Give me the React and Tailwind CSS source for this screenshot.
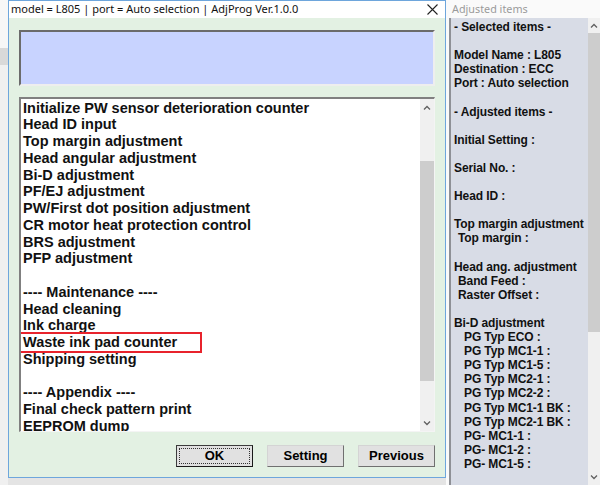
import { useState } from "react";

// 왼쪽 리스트 항목 (null = 빈 줄)
const menuItems = [
  "Initialize PW sensor deterioration counter",
  "Head ID input",
  "Top margin adjustment",
  "Head angular adjustment",
  "Bi-D adjustment",
  "PF/EJ adjustment",
  "PW/First dot position adjustment",
  "CR motor heat protection control",
  "BRS adjustment",
  "PFP adjustment",
  null,
  "---- Maintenance ----",
  "Head cleaning",
  "Ink charge",
  "Waste ink pad counter",
  "Shipping setting",
  null,
  "---- Appendix ----",
  "Final check pattern print",
  "EEPROM dump",
];

// 오른쪽 패널 줄: [텍스트, 들여쓰기]
const adjustedLines = [
  ["- Selected items -", 0],
  null,
  ["Model Name : L805", 0],
  ["Destination : ECC", 0],
  ["Port : Auto selection", 0],
  null,
  ["- Adjusted items -", 0],
  null,
  ["Initial Setting :", 0],
  null,
  ["Serial No. :", 0],
  null,
  ["Head ID :", 0],
  null,
  ["Top margin adjustment", 0],
  ["Top margin :", 1],
  null,
  ["Head ang. adjustment", 0],
  ["Band Feed :", 1],
  ["Raster Offset :", 1],
  null,
  ["Bi-D adjustment", 0],
  ["PG Typ ECO :", 2],
  ["PG Typ MC1-1 :", 2],
  ["PG Typ MC1-5 :", 2],
  ["PG Typ MC2-1 :", 2],
  ["PG Typ MC2-2 :", 2],
  ["PG Typ MC1-1 BK :", 2],
  ["PG Typ MC2-1 BK :", 2],
  ["PG- MC1-1 :", 2],
  ["PG- MC1-2 :", 2],
  ["PG- MC1-5 :", 2],
];

function Chevron({ up }) {
  return (
    <svg width="8" height="5" viewBox="0 0 8 5" className="block">
      <path
        d={up ? "M1 4.5 L4 1.5 L7 4.5" : "M1 0.5 L4 3.5 L7 0.5"}
        fill="none"
        stroke="#606060"
        strokeWidth="1.3"
      />
    </svg>
  );
}

function Button({ label, focused }) {
  return (
    <button
      className={`w-[77px] h-[22px] bg-[#e1e1e1] border text-[13px] font-bold text-black flex items-center justify-center ${
        focused
          ? "border-[#3c3c3c] border-b-[#1a1a1a] border-r-[#1a1a1a]"
          : "border-[#d4d4d4] border-b-[#707070] border-r-[#707070]"
      }`}
    >
      {focused ? (
        <span className="w-[71px] h-[16px] border border-dotted border-[#333] flex items-center justify-center">
          {label}
        </span>
      ) : (
        label
      )}
    </button>
  );
}

export default function App() {
  const [selected] = useState("Waste ink pad counter");

  return (
    <div
      className="w-[600px] h-[485px] flex bg-[#f0f0f0] overflow-hidden"
      style={{ fontFamily: '"Liberation Sans", Arial, sans-serif' }}
    >
      {/* 뒤쪽 창 일부 */}
      <div className="w-[8px] flex flex-col shrink-0">
        <div className="h-[48px] bg-[#f7f7f7]" />
        <div className="h-[17px] bg-[#d9d9d9]" />
        <div className="flex-1 bg-[#f0f0f0]" />
      </div>

      {/* AdjProg 메인 창 */}
      <div className="flex flex-col shrink-0">
        <div className="w-[438px] h-[478px] border border-[#6ea6dc] flex flex-col bg-white">
          <div className="h-[17px] flex items-center justify-between pl-[2px] pr-[7px]">
            <span
              className="text-[11px] text-[#111] whitespace-nowrap"
              style={{ fontFamily: '"Noto Sans", "Liberation Sans", sans-serif' }}
            >
              model = L805 | port = Auto selection | AdjProg Ver.1.0.0
            </span>
            <svg width="11" height="11" viewBox="0 0 11 11">
              <path d="M0.5 0.5 L10.5 10.5 M10.5 0.5 L0.5 10.5" stroke="#222" strokeWidth="1.1" />
            </svg>
          </div>

          <div className="flex-1 bg-[#e3f1e3] pl-[10px] pr-[10px] pt-[12px] flex flex-col">
            <div className="h-[56px] bg-[#c8d3ff] border-2 border-[#6b6b6b] border-b-[#eeeeee] border-r-[#eeeeee]" />

            <div className="mt-[11px] h-[335px] flex bg-white border-t-2 border-l-2 border-[#808080] border-b border-r border-b-[#f4f4f4] border-r-[#f4f4f4] overflow-hidden">
              <div className="flex-1 pl-[2px] pt-[0.5px] overflow-hidden">
                {menuItems.map((item, i) =>
                  item === null ? (
                    <div key={i} className="h-[16.75px]" />
                  ) : (
                    <div
                      key={i}
                      className="relative h-[16.75px] leading-[16.75px] text-[14.5px] font-bold text-[#111] whitespace-nowrap"
                    >
                      {item}
                      {item === selected && (
                        <span className="absolute -left-[4px] -top-[2px] w-[183px] h-[21px] border-2 border-[#e8232c]" />
                      )}
                    </div>
                  )
                )}
              </div>
              <div className="w-[14px] bg-[#f0f0f0] flex flex-col">
                <div className="h-[16px] flex items-center justify-center">
                  <Chevron up />
                </div>
                <div className="mt-[46px] h-[220px] bg-[#cdcdcd]" />
                <div className="flex-1" />
                <div className="h-[16px] flex items-center justify-center">
                  <Chevron />
                </div>
              </div>
            </div>

            <div className="mt-[13px] flex justify-end gap-[14px]">
              <Button label="OK" focused />
              <Button label="Setting" />
              <Button label="Previous" />
            </div>
          </div>
        </div>
        <div className="flex-1 bg-[#e4e4e4]" />
      </div>

      {/* 창 사이 여백 */}
      <div className="w-[3px] bg-[#fafafa] shrink-0" />

      {/* Adjusted items 패널 */}
      <div className="flex-1 flex flex-col">
        <div className="h-[18px] bg-[#fafafa] flex items-center pl-[3px]">
          <span
            className="text-[10.8px] text-[#9a9a9a] whitespace-nowrap"
            style={{ fontFamily: '"Noto Sans", "Liberation Sans", sans-serif' }}
          >
            Adjusted items
          </span>
        </div>
        <div className="flex-1 flex border-l-2 border-[#8e9096] overflow-hidden">
          <div className="flex-1 bg-[#d8dce6] pl-[3px] pt-[2px] overflow-hidden">
            {adjustedLines.map((line, i) =>
              line === null ? (
                <div key={i} className="h-[14.1px]" />
              ) : (
                <div
                  key={i}
                  className={`h-[14.1px] leading-[14.1px] text-[12px] tracking-[-0.1px] font-bold text-[#111] whitespace-nowrap ${
                    line[1] === 1 ? "pl-[4px]" : line[1] === 2 ? "pl-[10px]" : ""
                  }`}
                >
                  {line[0]}
                </div>
              )
            )}
          </div>
          <div className="w-[12px] bg-[#f0f0f0] flex flex-col">
            <div className="h-[15px] flex items-center justify-center">
              <Chevron up />
            </div>
            <div className="h-[299px] bg-[#cdcdcd]" />
            <div className="flex-1" />
            <div className="h-[16px] flex items-center justify-center">
              <Chevron />
            </div>
          </div>
        </div>
      </div>
    </div>
  );
}
